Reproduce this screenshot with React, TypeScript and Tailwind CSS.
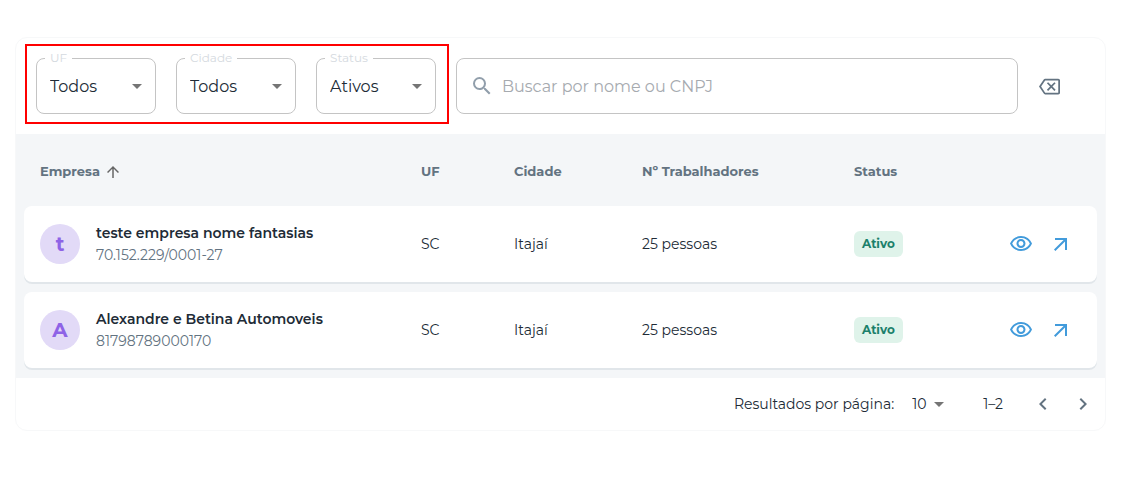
import {
  MdArrowDropDown,
  MdArrowOutward,
  MdArrowUpward,
  MdChevronLeft,
  MdChevronRight,
  MdOutlineBackspace,
  MdOutlineVisibility,
  MdSearch,
} from "react-icons/md";

type FilterProps = { id: string; label: string; options: string[] };

function FilterSelect({ id, label, options }: FilterProps) {
  return (
    <div className="relative w-[120px]">
      <label
        htmlFor={id}
        className="absolute -top-2 left-[9px] bg-white px-[5px] text-xs leading-4 text-[#d5dae0]"
      >
        {label}
      </label>
      <select
        id={id}
        className="h-14 w-full appearance-none rounded-lg border border-[#c4c4c4] bg-transparent pt-0.5 pr-8 pl-[13px] text-base text-[#212b36]"
      >
        {options.map((option) => (
          <option key={option}>{option}</option>
        ))}
      </select>
      <MdArrowDropDown className="pointer-events-none absolute top-4 right-[7px] size-6 text-[#757575]" />
    </div>
  );
}

const companies = [
  {
    initial: "t",
    name: "teste empresa nome fantasias",
    document: "70.152.229/0001-27",
    uf: "SC",
    city: "Itajaí",
    workers: "25 pessoas",
    status: "Ativo",
  },
  {
    initial: "A",
    name: "Alexandre e Betina Automoveis",
    document: "81798789000170",
    uf: "SC",
    city: "Itajaí",
    workers: "25 pessoas",
    status: "Ativo",
  },
];

export default function App() {
  return (
    <main className="bg-white px-[15px] pt-[37px] pb-14 font-[Montserrat,Inter,sans-serif] text-[#212b36]">
      <section className="overflow-hidden rounded-xl border border-[#f7f8f9]">
        <div className="flex items-center pt-[6px] pr-[45px] pb-[10px] pl-[9px]">
          <div className="flex shrink-0 gap-5 border-2 border-[#ff0000] pt-3 pr-[11px] pb-2 pl-[9px]">
            <FilterSelect id="uf" label="UF" options={["Todos", "SC"]} />
            <FilterSelect id="cidade" label="Cidade" options={["Todos", "Itajaí"]} />
            <FilterSelect id="status" label="Status" options={["Ativos", "Inativos"]} />
          </div>
          <div className="mt-1 ml-[7px] flex h-14 min-w-0 flex-1 items-center gap-2 rounded-lg border border-[#c4c4c4] px-[13px]">
            <MdSearch className="size-6 shrink-0 text-[#919eab]" />
            <input
              type="text"
              aria-label="Buscar por nome ou CNPJ"
              placeholder="Buscar por nome ou CNPJ"
              className="min-w-0 flex-1 bg-transparent pt-0.5 text-base outline-none placeholder:text-[#a6aaaf]"
            />
          </div>
          <button
            type="button"
            aria-label="Limpar filtros"
            className="mt-1 ml-[21px] text-[#637381]"
          >
            <MdOutlineBackspace className="size-[21px]" />
          </button>
        </div>

        <div className="bg-[#f4f6f8] px-2">
          <table className="w-full table-fixed border-separate border-spacing-x-0 border-spacing-y-[10px] text-left">
            <thead>
              <tr className="h-[52px] text-[13px] text-[#637381]">
                <th className="px-4 pt-1 font-bold">
                  <button type="button" className="flex items-center gap-1 font-bold">
                    Empresa
                    <MdArrowUpward className="size-[18px] text-[#666666]" />
                  </button>
                </th>
                <th className="w-[93px] px-4 pt-1 font-bold">UF</th>
                <th className="w-32 px-4 pt-1 font-bold">Cidade</th>
                <th className="w-[212px] px-4 pt-1 font-bold">Nº Trabalhadores</th>
                <th className="w-[120px] px-4 pt-1 font-bold">Status</th>
                <th className="w-[139px]" aria-label="Ações" />
              </tr>
            </thead>
            <tbody>
              {companies.map((company) => (
                <tr
                  key={company.document}
                  className="h-[76px] rounded-lg bg-white text-sm shadow-[0_2px_0_#e1e6ea]"
                >
                  <td className="rounded-l-lg px-4">
                    <div className="flex items-center gap-4">
                      <span className="flex size-10 shrink-0 items-center justify-center rounded-full bg-[#e2daf7] text-xl font-bold text-[#8e63e6]">
                        {company.initial}
                      </span>
                      <div className="leading-[22px]">
                        <p className="font-semibold">{company.name}</p>
                        <p className="text-[#637381]">{company.document}</p>
                      </div>
                    </div>
                  </td>
                  <td className="px-4">{company.uf}</td>
                  <td className="px-4">{company.city}</td>
                  <td className="px-4">{company.workers}</td>
                  <td className="px-4">
                    <span className="inline-flex h-[26px] items-center rounded-md bg-[#dff3ea] px-2 text-xs font-bold text-[#1b806a]">
                      {company.status}
                    </span>
                  </td>
                  <td className="rounded-r-lg pr-6">
                    <div className="flex justify-end gap-4 text-[#429bdb]">
                      <button type="button" aria-label={`Visualizar ${company.name}`}>
                        <MdOutlineVisibility className="size-6" />
                      </button>
                      <button type="button" aria-label={`Abrir ${company.name}`}>
                        <MdArrowOutward className="size-6" />
                      </button>
                    </div>
                  </td>
                </tr>
              ))}
            </tbody>
          </table>
        </div>

        <div className="flex h-[52px] items-center justify-end pr-[10px] text-sm">
          <label htmlFor="rows">Resultados por página:</label>
          <div className="relative ml-[18px]">
            <select id="rows" className="w-[39px] appearance-none bg-transparent">
              <option>10</option>
              <option>25</option>
            </select>
            <MdArrowDropDown className="pointer-events-none absolute -top-0.5 right-0 size-6 text-[#757575]" />
          </div>
          <span className="ml-8">1–2</span>
          <div className="ml-7 flex gap-4 text-[#637381]">
            <button type="button" aria-label="Página anterior">
              <MdChevronLeft className="size-6" />
            </button>
            <button type="button" aria-label="Próxima página">
              <MdChevronRight className="size-6" />
            </button>
          </div>
        </div>
      </section>
    </main>
  );
}
